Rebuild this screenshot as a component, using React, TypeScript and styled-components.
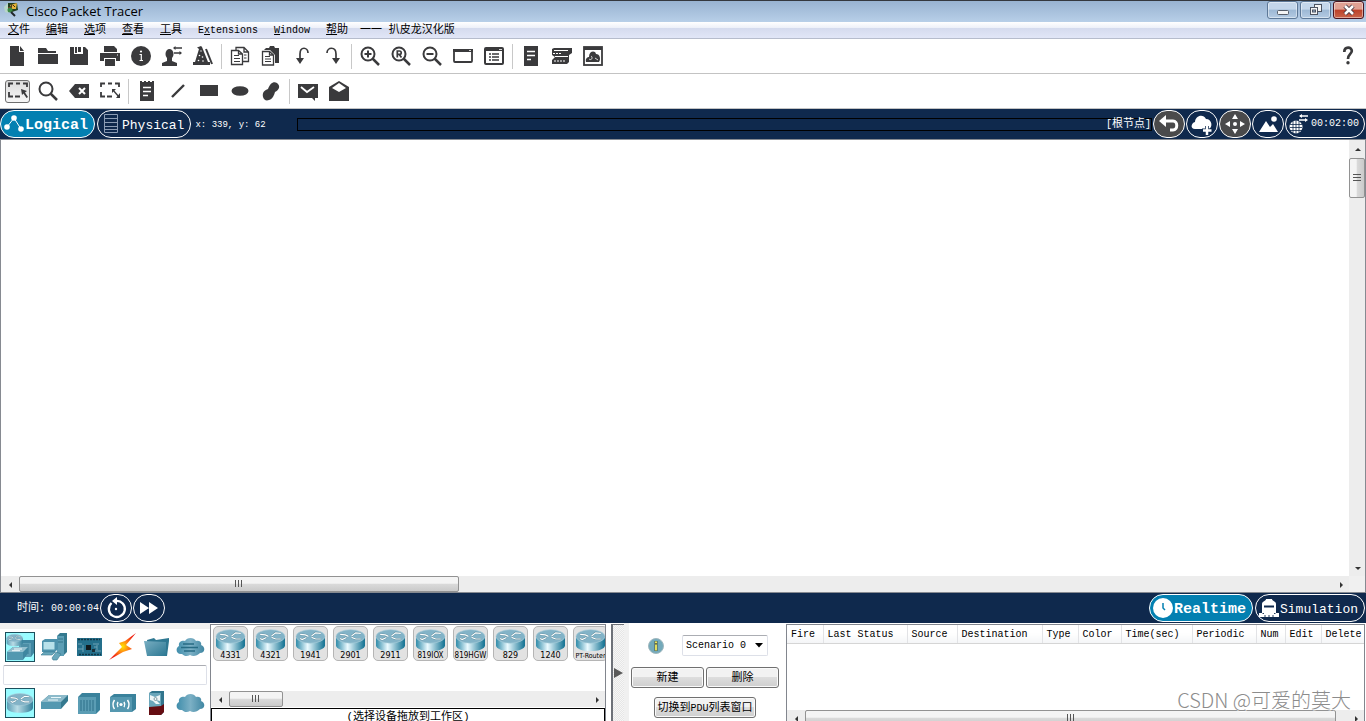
import React from "react";
import styled, { createGlobalStyle, css } from "styled-components";

const INK = "#3a3a3c";
const NAVY = "#0f294d";
const MONO = `"Liberation Mono", "Noto Sans CJK SC", monospace`;

const GlobalStyle = createGlobalStyle`
  * { box-sizing: border-box; }
  body { margin: 0; background: #fff; color: #000; font: 10px/14px ${MONO}; }
  button, input, select { font: inherit; color: inherit; margin: 0; padding: 0; }
  svg { display: block; flex: none; }
`;

const Window = styled.div`
  display: flex;
  flex-direction: column;
  height: 100vh;
  min-height: 480px;
  overflow: hidden;
  position: relative;
`;

const Cn = styled.span`
  font-size: 11px;
`;

/* ---------- title bar ---------- */
const TitleBar = styled.header`
  display: flex;
  height: 22px;
  flex: none;
  border-top: 1px solid #34383e;
  background: linear-gradient(#98b3d1, #b8cfe8);
  padding: 0 2px 0 4px;
`;
const Title = styled.h1`
  flex: 1;
  margin: 0 0 0 6px;
  font: 400 13px/20px "Open Sans", "Noto Sans", sans-serif;
`;
const WindowButtons = styled.div`
  display: flex;
  gap: 2px;
`;
const WindowButton = styled.button<{ $close?: boolean }>`
  width: 31px;
  height: 18px;
  display: flex;
  align-items: center;
  justify-content: center;
  border: 1px solid ${(p) => (p.$close ? "#4a1420" : "#5d7897")};
  border-radius: 3px;
  box-shadow: inset 0 0 0 1px rgba(255, 255, 255, 0.45);
  background: ${(p) =>
    p.$close
      ? "linear-gradient(#e0a193 0 45%, #bd4029 50%, #c9644a)"
      : "linear-gradient(#c4d6ea 0 45%, #9db8d4 50%, #b4cbe3)"};
`;

/* ---------- menu ---------- */
const MenuBar = styled.nav`
  display: flex;
  gap: 16px;
  flex: none;
  height: 17px;
  padding: 0 8px;
  border-bottom: 1px solid #b6bccc;
  background: linear-gradient(#fff, #eef1f9 35%, #d5dbee 40%, #e1e6f7);
`;
const MenuItem = styled.button`
  border: 0;
  background: none;
  line-height: 17px;
  white-space: nowrap;
`;
const MenuNote = styled(Cn)`
  margin-left: -4px;
  line-height: 17px;
  white-space: pre;
`;

/* ---------- toolbars ---------- */
const Toolbar = styled.div`
  display: flex;
  align-items: center;
  flex: none;
  height: 35px;
  padding: 0 3px 0 1px;
  border-bottom: 1px solid #c3c3c3;
  background: #fff;
`;
const ToolButton = styled.button<{ $active?: boolean }>`
  width: 31px;
  height: 26px;
  display: flex;
  align-items: center;
  justify-content: center;
  border: 0;
  background: none;
  ${(p) =>
    p.$active &&
    css`
      width: 25px;
      height: 23px;
      margin: 0 2px 0 4px;
      border: 1px solid #6e6e6e;
      border-radius: 3px;
      background: linear-gradient(#dcdcdc, #f6f6f6);
    `}
`;
const Separator = styled.span`
  width: 1px;
  height: 25px;
  margin: 0 2px 0 3px;
  background: #c8c8c8;
`;
const Spacer = styled.span`
  flex: 1;
`;

/* ---------- navy bars ---------- */
const NavyBar = styled.div`
  display: flex;
  align-items: center;
  flex: none;
  height: 30px;
  padding-right: 1px;
  background: ${NAVY};
  color: #fff;
`;
const ViewButton = styled.button<{ $active?: boolean }>`
  display: flex;
  align-items: center;
  height: 28px;
  padding: 0 6px 0 2px;
  margin-right: 2px;
  border: 1px solid #fff;
  border-radius: 14px;
  background: ${(p) => (p.$active ? "#0380b1" : NAVY)};
  font-size: ${(p) => (p.$active ? "15px" : "13px")};
  font-weight: ${(p) => (p.$active ? 700 : 400)};
  line-height: 20px;
  white-space: nowrap;
  &:last-child { margin-right: 0; }
`;
const ViewLabel = styled.span`
  padding-top: 3px;
`;
const Coordinates = styled.span`
  width: 104px;
  padding: 1px 0 0 2px;
  font-size: 9px;
`;
const PathBox = styled.div`
  display: flex;
  justify-content: flex-end;
  align-items: center;
  flex: 1;
  height: 13px;
  margin-right: 1px;
  border: 1px solid #000;
`;
const RoundButtons = styled.div`
  display: flex;
  gap: 1px;
`;
const RoundButton = styled.button<{ $gray?: boolean; $wide?: boolean }>`
  display: flex;
  align-items: center;
  justify-content: center;
  width: ${(p) => (p.$wide ? "80px" : "32px")};
  height: 28px;
  padding-right: ${(p) => (p.$wide ? "4px" : "0")};
  border: 1px solid #fff;
  border-radius: 14px;
  background: ${(p) => (p.$gray ? "#4a4a4b" : NAVY)};
`;
const Clock = styled.span`
  width: 100px;
  padding-left: 17px;
  white-space: nowrap;
`;

/* ---------- workspace ---------- */
const Workspace = styled.main`
  display: grid;
  grid-template-columns: 1fr 16px;
  grid-template-rows: 1fr 16px;
  flex: 1;
  min-height: 0;
  border: 1px solid #868a91;
  background: #fff;
`;
const Corner = styled.span`
  background: #f0f0f0;
`;
const ScrollTrack = styled.div<{ $vertical?: boolean }>`
  display: flex;
  flex: none;
  flex-direction: ${(p) => (p.$vertical ? "column" : "row")};
  ${(p) => (p.$vertical ? "width: 16px;" : "height: 16px;")}
  min-width: 0;
  background: #ededed;
`;
const ScrollArrow = styled.button`
  display: flex;
  align-items: center;
  justify-content: center;
  flex: none;
  width: 17px;
  height: 17px;
  border: 0;
  background: none;
`;
const ScrollRail = styled.div<{ $vertical?: boolean }>`
  display: flex;
  flex-direction: ${(p) => (p.$vertical ? "column" : "row")};
  flex: 1;
  min-width: 0;
  min-height: 0;
  padding: ${(p) => (p.$vertical ? "1px 0 0" : "0 0 0 1px")};
`;
const ScrollThumb = styled.div<{ $size: number; $vertical?: boolean }>`
  display: flex;
  align-items: center;
  justify-content: center;
  flex: 0 0 ${(p) => p.$size}%;
  border: 1px solid #929292;
  border-radius: 2px;
  background: ${(p) =>
    p.$vertical
      ? "linear-gradient(90deg, #f4f4f4 0 45%, #dadada 50%, #cacaca)"
      : "linear-gradient(#f4f4f4 0 45%, #dadada 50%, #cacaca)"};
`;

/* ---------- bottom area ---------- */
const Bottom = styled.div`
  display: flex;
  flex: none;
  height: 98px;
  background: #fff;
`;
const Categories = styled.section`
  flex: none;
  width: 210px;
  padding: 3px 3px 0;
  border-top: 6px solid #f0f0f0;
`;
const CategoryRow = styled.div`
  display: flex;
  gap: 4px;
  padding: 0 2px;
`;
const CategoryButton = styled.button<{ $active?: boolean }>`
  width: 30px;
  height: 30px;
  border: 0;
  background: ${(p) => (p.$active ? "#99fbff" : "none")};
  ${(p) => p.$active && "box-shadow: inset 0 0 0 1px #1c4f5c;"}
`;
const Search = styled.input`
  display: block;
  width: 100%;
  height: 20px;
  margin: 3px 0;
  padding: 0 4px;
  border: 1px solid #dde0e8;
  border-top-color: #abadb3;
  border-radius: 2px;
`;
const Devices = styled.section`
  display: flex;
  flex-direction: column;
  flex: none;
  width: 396px;
  margin-top: 1px;
  border: 1px solid #82868e;
  border-bottom: 0;
`;
const DeviceList = styled.div`
  display: flex;
  flex: none;
  gap: 5px;
  height: 66px;
  padding: 1px 2px;
  overflow: hidden;
`;
const DeviceButton = styled.button<{ $narrow?: boolean; $tiny?: boolean }>`
  display: flex;
  flex-direction: column;
  align-items: center;
  flex: none;
  width: 35px;
  height: 35px;
  border: 1px solid #b5b5b5;
  border-radius: 5px;
  background: #e2e2e2;
  font: ${(p) => (p.$tiny ? "7px" : "8px")}/10px ${(p) =>
    p.$narrow ? `"DejaVu Sans Condensed", "DejaVu Sans"` : `"DejaVu Sans"`}, sans-serif;
  white-space: nowrap;
`;
const DeviceHint = styled.p`
  flex: none;
  margin: 1px 0 0;
  padding-top: 1px;
  border: 1px solid #000;
  border-bottom: 0;
  font-size: 11px;
  line-height: 14px;
  text-align: center;
`;
const Splitter = styled.button`
  display: flex;
  align-items: center;
  justify-content: center;
  flex: none;
  width: 13px;
  margin: 1px 0 0 5px;
  border: 0;
  border-left: 2px solid #6d7178;
  border-top: 1px solid #6d7178;
  background: repeating-conic-gradient(#e6e6e6 0 25%, #f6f6f6 0 50%) 0 0 / 2px 2px;
`;
const Scenario = styled.section`
  flex: none;
  width: 162px;
  padding: 12px 7px 0 2px;
  border-left: 5px solid #f0f0f0;
`;
const ScenarioRow = styled.div<{ $head?: boolean }>`
  display: flex;
  align-items: center;
  justify-content: center;
  gap: ${(p) => (p.$head ? 18 : 2)}px;
  height: 21px;
  padding-left: ${(p) => (p.$head ? 6 : 0)}px;
  margin-bottom: ${(p) => (p.$head ? 11 : 9)}px;
`;
const SelectWrap = styled.label`
  display: flex;
  align-items: center;
  width: 86px;
  height: 21px;
  padding-right: 4px;
  border: 1px solid #dde0e8;
  border-top-color: #abadb3;
  border-radius: 2px;
`;
const Select = styled.select`
  flex: 1;
  min-width: 0;
  padding-left: 3px;
  border: 0;
  appearance: none;
  background: none;
`;
const PushButton = styled.button`
  flex: 0 1 auto;
  min-width: 73px;
  height: 21px;
  padding: 1px 2px 0;
  border: 1px solid #707070;
  border-radius: 3px;
  box-shadow: inset 0 0 0 1px #fafafa;
  background: linear-gradient(#f2f2f2 0 45%, #dddddd 50%, #cfcfcf);
  font-size: 11px;
  line-height: 16px;
  white-space: nowrap;
`;
const Latin = styled.span`
  font-size: 10px;
`;
const PduPanel = styled.section`
  display: flex;
  flex-direction: column;
  flex: 1;
  min-width: 0;
  margin: 1px 1px 0 0;
  border: 1px solid #82868e;
  border-bottom: 0;
`;
const TableArea = styled.div`
  flex: none;
  height: 85px;
  overflow: hidden;
`;
const Table = styled.table`
  width: 100%;
  border-collapse: collapse;
  table-layout: fixed;
`;
const HeadCell = styled.th<{ $width?: number }>`
  ${(p) => p.$width && `width: ${p.$width}px;`}
  height: 18px;
  padding: 3px 0 0 4px;
  border-right: 1px solid #e2e3e6;
  border-bottom: 1px solid #d5d5d5;
  background: linear-gradient(#fff 0 45%, #f4f5f7);
  font-weight: 400;
  text-align: left;
  white-space: nowrap;
  &:last-child { border-right: 0; }
`;
const Watermark = styled.span`
  position: absolute;
  right: 15px;
  bottom: 7px;
  color: #8c8c8c;
  font: 300 20px/28px "Noto Sans CJK SC", sans-serif;
  text-shadow: 1px 1px 0 #fff;
  pointer-events: none;
`;

/* ---------- drawings ---------- */
const Icon = ({ children }: { children: React.ReactNode }) => (
  <svg width="20" height="20" viewBox="0 0 20 20" fill={INK} aria-hidden="true">
    {children}
  </svg>
);

const magnifier = (
  <>
    <circle cx="8" cy="8" r="6.500" fill="none" stroke={INK} strokeWidth="2" />
    <path d="M12.500 12.500L19 19" stroke={INK} strokeWidth="2.500" />
  </>
);
const line = { fill: "none", stroke: INK };
const white = { fill: "none", stroke: "#fff" };
const marquee = (
  <path
    d="M1 6V2.500H5M8 2.500H12M15 2.500H19V6M1 11V15.500H5M7 15.500H12"
    {...line}
    strokeWidth="1.800"
  />
);

const icons: Record<string, React.ReactNode> = {
  New: <path d="M3 0H12V6H17V20H3zM13 0L17 5H13z" />,
  Open: <path d="M0 2H8L10 5H18V7H0zM0 8H20V18H0z" />,
  Save: (
    <path fillRule="evenodd" d="M1 1H5V8H14V1H16L19 4V19H1zM9 1H12V6H9zM6 1H8V7H6z" />
  ),
  Print: (
    <>
      <path d="M4 0H14L17 3V6H4zM0 7H20V15H16V12H4V15H0zM5 13H15V20H5z" />
      <path d="M17 9h1" {...white} />
    </>
  ),
  "Activity Wizard": (
    <>
      <circle cx="10" cy="10" r="10" />
      <path d="M8.500 8.500H10.300V14.500M8.500 14.500H12" {...white} strokeWidth="1.200" />
      <circle cx="10" cy="5.500" r="1.100" fill="#fff" />
    </>
  ),
  "User Profile": (
    <>
      <ellipse cx="7.500" cy="8" rx="4" ry="5" />
      <path d="M5 11H10V15L15 17V20H0V17L5 15z" />
      <path d="M13 2H20M12 7H19" {...line} strokeWidth="1.600" />
      <path d="M13.500 0V4L11 2zM17.500 5V9L20 7z" />
    </>
  ),
  "Custom Devices": (
    <>
      <path d="M9 1L15 16H17V19H0V16H2L6 3L4 1.500L8 0z" />
      <path d="M13 3L19 18" {...line} strokeWidth="2" />
      <circle cx="8" cy="5" r="0.700" fill="#fff" />
      <circle cx="6.500" cy="9.500" r="0.800" fill="#fff" />
      <circle cx="9.500" cy="11" r="0.800" fill="#fff" />
      <circle cx="5.500" cy="14.500" r="0.800" fill="#fff" />
      <circle cx="10" cy="15" r="0.800" fill="#fff" />
    </>
  ),
  Copy: (
    <>
      <path d="M6 4V1.500H14L18.500 6V15.500H13M14 1.500V6H18" {...line} strokeWidth="1.300" />
      <path d="M1.500 4.500H8.500L12.500 8V18.500H1.500zM8.500 4.500V8H12.500" {...line} strokeWidth="1.300" />
      <path d="M4 9.500H9M4 12.500H10M4 15.500H10M14 9H16.500M14 12H16.500" {...line} />
    </>
  ),
  Paste: (
    <>
      <path d="M3 4L5 2H8L9 0H13L14 2H18V17H14V9L9 4z" />
      <path d="M1.500 5.500H8.500L12.500 9V19H1.500zM8.500 5.500V9H12.500" {...line} strokeWidth="1.300" />
      <path d="M4 10.500H9M4 13H10M4 15.500H10" {...line} />
    </>
  ),
  Undo: (
    <>
      <path d="M16 7C16 1 8 0 8 8V13" {...line} strokeWidth="1.700" />
      <path d="M4 12H12L8 18z" />
    </>
  ),
  Redo: (
    <>
      <path d="M4 7C4 1 13 0 13 8V13" {...line} strokeWidth="1.700" />
      <path d="M9 12H17L13 18z" />
    </>
  ),
  "Zoom In": (
    <>
      {magnifier}
      <path d="M4.500 8H11.500M8 4.500V11.500" {...line} strokeWidth="2" />
    </>
  ),
  "Zoom Reset": (
    <>
      {magnifier}
      <path d="M6.300 11.500V5H8.500A1.700 1.700 0 0 1 8.500 8.400H6.300M8.300 8.400L10.500 11.500" {...line} strokeWidth="1.700" />
    </>
  ),
  "Zoom Out": (
    <>
      {magnifier}
      <path d="M4.500 8H11.500" {...line} strokeWidth="2" />
    </>
  ),
  Viewport: (
    <>
      <rect x="1" y="4" width="18" height="12" rx="1" {...line} strokeWidth="1.800" />
      <path d="M0 3H20V6H0z" />
      <path d="M16 4.500H18" {...white} strokeWidth="0.800" />
    </>
  ),
  "Workspace List": (
    <>
      <rect x="1" y="2" width="18" height="16" rx="1" {...line} strokeWidth="2" />
      <path d="M1 3.500H19" {...line} strokeWidth="3" />
      <path d="M5 8H7M8 8H15M5 11H7M8 11H15M5 14H7M8 14H15" {...line} strokeWidth="1.500" />
      <path d="M15 3.500H18" {...white} strokeWidth="0.800" />
    </>
  ),
  Palette: (
    <>
      <rect x="3" width="14" height="20" />
      <path d="M6 5.500H14M6 9.500H14M6 13.500H10" {...white} strokeWidth="1.500" />
    </>
  ),
  "Device Rack": (
    <>
      <path d="M0 3L2 2H20V7L17 9V16L15 18H0V14L3 11L0 9z" />
      <path d="M2 4.500H16M1 7.500H3M4 7.500H6M7 7.500H9M3 10.500H16M2 15H4M5 15H7M8 15H10M11 15H13" {...white} strokeWidth="1" />
    </>
  ),
  "Cloud Window": (
    <>
      <rect x="1" y="1" width="18" height="18" {...line} strokeWidth="1.800" />
      <path d="M1 2.500H19" {...line} strokeWidth="3" />
      <path d="M3 16C2 12 5 11 6 11C6 5 12 4 13 8C17 8 18 13 16 16z" />
      <path d="M6 13C9 15 10 11 8 10M12 12L15 14" {...white} strokeWidth="0.800" />
    </>
  ),
  Help: (
    <>
      <path d="M6.300 6C6.300 0 14 0.500 13.800 5C13.600 8 10 8 10 13" {...line} strokeWidth="2.700" />
      <circle cx="10" cy="16.800" r="1.700" />
    </>
  ),
  Select: (
    <>
      {marquee}
      <path d="M13 8L19 10L17 11.500L20 16L18.500 17L15.500 12.500L14 14z" />
    </>
  ),
  Inspect: magnifier,
  Delete: (
    <>
      <path d="M0 10L6 3H20V17H6z" />
      <path d="M10 7L16 13M16 7L10 13" {...white} strokeWidth="2" />
    </>
  ),
  Resize: (
    <>
      {marquee}
      <path d="M12 8H16L12 12zM20 12V17H16z" />
      <path d="M13 9L19 16" {...line} strokeWidth="1.300" />
    </>
  ),
  "Place Note": (
    <>
      <path d="M3 0H5V1H7V0H9V1H11V0H13V1H15V0H17V20H3z" />
      <path d="M6 6.500H14M6 10.500H14M6 14.500H11" {...white} strokeWidth="1.300" />
    </>
  ),
  "Draw Line": <path d="M4 16L16 4" {...line} strokeWidth="2.400" />,
  "Draw Rectangle": <rect x="1" y="4" width="18" height="11" />,
  "Draw Ellipse": <ellipse cx="10" cy="10" rx="8.500" ry="4.800" />,
  "Draw Freeform": (
    <path d="M2 16C1 11 4 9 7 8C9 3 12 0 16 2C20 5 18 9 14 11C13 14 12 18 8 19C5 20 3 19 2 16z" />
  ),
  "Simple PDU": (
    <>
      <path d="M0 3H20V17H17V20L14 17H0z" />
      <path d="M3 6L9 11L16 6" {...white} strokeWidth="1.800" />
    </>
  ),
  "Complex PDU": (
    <>
      <path d="M0 6L10 0L20 6V20H0z" />
      <path d="M3 7L10 2L17 7L10 11z" fill="#fff" />
    </>
  ),
};

const Tool = ({ name, active }: { name: string; active?: boolean }) => (
  <ToolButton type="button" aria-label={name} $active={active}>
    <Icon>{icons[name]}</Icon>
  </ToolButton>
);

const ToolGroups = ({ groups }: { groups: string[][] }) => (
  <>
    {groups.map((g, i) => (
      <React.Fragment key={i}>
        {i > 0 && <Separator />}
        {g.map((n) => (
          <Tool key={n} name={n} active={n === "Select"} />
        ))}
      </React.Fragment>
    ))}
  </>
);

const arrows = { left: "M6 1V7L3 4z", right: "M3 1V7L6 4z", up: "M1 6H7L4 3z", down: "M1 3H7L4 6z" };
const Arrow = ({ dir }: { dir: keyof typeof arrows }) => (
  <ScrollArrow type="button" aria-label={`Scroll ${dir}`}>
    <svg width="8" height="8" viewBox="0 0 8 8" fill="#333">
      <path d={arrows[dir]} />
    </svg>
  </ScrollArrow>
);
const ScrollBar = ({ size, vertical }: { size: number; vertical?: boolean }) => (
  <ScrollTrack $vertical={vertical}>
    <Arrow dir={vertical ? "up" : "left"} />
    <ScrollRail $vertical={vertical}>
      <ScrollThumb $size={size} $vertical={vertical}>
        <svg width="8" height="8" viewBox="0 0 8 8" stroke="#555">
          <path d={vertical ? "M0 .5H8M0 3.5H8M0 6.5H8" : "M.5 0V7M3.5 0V7M6.5 0V7"} />
        </svg>
      </ScrollThumb>
    </ScrollRail>
    <Arrow dir={vertical ? "down" : "right"} />
  </ScrollTrack>
);

const Gradients = () => (
  <svg width="0" height="0" style={{ position: "absolute" }} aria-hidden="true">
    <defs>
      <linearGradient id="drum">
        <stop offset="0" stopColor="#2f8aa8" />
        <stop offset="0.4" stopColor="#eafaff" />
        <stop offset="1" stopColor="#0f6f90" />
      </linearGradient>
      <linearGradient id="soft">
        <stop offset="0" stopColor="#5a9db5" />
        <stop offset="0.4" stopColor="#b9dce6" />
        <stop offset="1" stopColor="#34809b" />
      </linearGradient>
      <linearGradient id="steel" x2="1" y2="1">
        <stop offset="0" stopColor="#79aec2" />
        <stop offset="1" stopColor="#2c7893" />
      </linearGradient>
      <linearGradient id="cloud">
        <stop offset="0" stopColor="#3f8dab" />
        <stop offset="0.5" stopColor="#7cb0c5" />
        <stop offset="1" stopColor="#3f86a2" />
      </linearGradient>
      <radialGradient id="bolt">
        <stop offset="0" stopColor="#ffe600" />
        <stop offset="0.5" stopColor="#ff7b16" />
        <stop offset="1" stopColor="#ee1c10" />
      </radialGradient>
    </defs>
  </svg>
);

const routerArrows = "M5 5L10 5.5L13 7M11 8L7 10L5 9M25 4L20 3.5L16 6.500M16 8L20 9.500L25 9.500";
const RouterShape = ({ fill }: { fill: string }) => (
  <>
    <path d="M1 7V16C2 23 28 23 29 16V7z" fill={`url(#${fill})`} />
    <ellipse cx="15" cy="7" rx="14" ry="6.500" fill="#83b3c7" stroke="#a8ccd9" strokeWidth="0.600" />
    <path d={routerArrows} fill="none" stroke="#4d7f90" strokeWidth="1.800" />
    <path d={routerArrows} fill="none" stroke="#fff" strokeWidth="1.200" />
  </>
);
const cloudPath =
  "M7 22C1 23 0 16 4 14C3 9 8 8 10 9C12 5 19 5 21 9C25 8 27 11 26 13C31 15 30 21 25 21C22 24 18 25 15 23C12 25 9 24 7 22z";

const categoryArt: Record<string, React.ReactNode> = {
  "Network Devices": (
    <>
      <path d="M14 11L17 8H29V21L26 25H14z" fill="#3f86a1" />
      <path d="M14 11H26V25H14z" fill="#5e9fb6" />
      <path d="M17 12V22M19 12V22M21 12V22M23 12V22" stroke="#2f718a" strokeWidth="0.700" />
      <g transform="translate(1 2) scale(.58)"><RouterShape fill="soft" /></g>
      <path d="M2 20L8 15H23V21L18 28H2z" fill="#3e86a0" />
      <path d="M2 20L8 15H23L18 20z" fill="#94c0cf" />
      <path d="M2 20H18V28H2z" fill="#5398b0" />
      <path d="M9 17H17M7 18.700H15" stroke="#fff" strokeWidth="0.900" />
    </>
  ),
  "End Devices": (
    <>
      <path d="M18 4L21 1H28V20L24 24H18z" fill="#34798f" />
      <path d="M18 4H25V24H18z" fill="#5c9eb5" />
      <path d="M19 7H24M19 10H24" fill="none" stroke="#2b6c84" strokeWidth="0.800" />
      <path d="M3 9L6 7H19V17L16 20H3z" fill="#4d92ac" />
      <rect x="4.500" y="10" width="11" height="7.500" fill="#b8e1ea" />
      <path d="M2 23L5 20H16L13 23zM13 26L17 20L22 22L18 28H14z" fill="#6aa8bc" stroke="#387991" strokeWidth="0.600" />
    </>
  ),
  Components: (
    <>
      <path d="M4 6H29V24H4z" fill="#246f8b" />
      <path d="M5 7.500H27M6 22.500H28" stroke="#123848" strokeWidth="1.500" strokeDasharray="2 1" />
      <rect x="13" y="13" width="5" height="5" fill="#11191d" />
      <path d="M5 12H9M5 17H10M20 12H26M21 15H24M20 19H28M10 13V20M24 13V18" stroke="#6ea3b5" />
      <path d="M19 17H22V20H19z" fill="#192f38" />
    </>
  ),
  Connections: <path d="M29 1L18 9L12 11L15 15L2 28L16 20L25 17L19 13z" fill="url(#bolt)" />,
  Miscellaneous: (
    <>
      <path d="M6 8L13 6L15 8L28 6V9L26 24H8z" fill="#2f7892" />
      <path d="M3 9L25 10V24H6z" fill="url(#steel)" />
    </>
  ),
  "Multiuser Connection": (
    <>
      <path d={cloudPath} fill="url(#cloud)" />
      <path d="M8 12H19M6 15.500H23M9 19H20" stroke="#276b84" strokeWidth="1.300" />
    </>
  ),
  Routers: <g transform="translate(1 5) scale(.93)"><RouterShape fill="soft" /></g>,
  Switches: (
    <>
      <path d="M2 14L10 7H29V13L22 21H2z" fill="#34798f" />
      <path d="M2 14L10 7H29L22 14z" fill="#8cbaca" />
      <path d="M2 14H22V21H2z" fill="#5398b0" />
      <path d="M12 9.500H22M9 12H19" stroke="#e9f7fa" />
    </>
  ),
  Hubs: (
    <>
      <path d="M5 9L9 5H27V22L23 26H5z" fill="#3a829c" />
      <rect x="5" y="9" width="18" height="17" fill="#5b9db4" />
      <path d="M8 12V23M11 12V23M14 12V23M17 12V23M20 12V23" stroke="#2d6f88" />
    </>
  ),
  "Wireless Devices": (
    <>
      <path d="M3 9L7 6H29V21L25 24H3z" fill="#3a829c" />
      <rect x="3" y="9" width="22" height="15" fill="#5598b0" />
      <circle cx="14" cy="16.500" r="1.600" fill="#fff" />
      <path d="M11 14Q9.500 16.500 11 19M17 14Q18.500 16.500 17 19M7.500 12Q4.500 16.500 7.500 21M20.500 12Q23.500 16.500 20.500 21" fill="none" stroke="#fff" strokeWidth="1.500" />
    </>
  ),
  Security: (
    <>
      <path d="M8 5L11 3H23V24L20 27H8z" fill="#32758d" />
      <path d="M8 5H20V19H8z" fill="#6aa6ba" />
      <path d="M8 19L20 18L23 16V24L20 27H8z" fill="#650d12" />
      <path d="M9 7L14 9L19 7V13L15 12L19 16H15L12 13L9 12z" fill="#eef6f7" />
      <circle cx="14.500" cy="11" r="1.500" fill="none" stroke="#5a7a84" strokeWidth="0.700" />
    </>
  ),
  "WAN Emulation": <path d={cloudPath} fill="url(#cloud)" />,
};
const categoryRows = [Object.keys(categoryArt).slice(0, 6), Object.keys(categoryArt).slice(6)];

const devices = ["4331", "4321", "1941", "2901", "2911", "819IOX", "819HGW", "829", "1240", "PT-Router"];
const columns: [string, number?][] = [
  ["Fire", 36], ["Last Status", 84], ["Source", 50], ["Destination", 85], ["Type", 36],
  ["Color", 43], ["Time(sec)", 71], ["Periodic", 64], ["Num", 29], ["Edit", 36], ["Delete"],
];
const menus: [string, string, string][] = [
  ["", "文", "件"], ["", "编", "辑"], ["", "选", "项"], ["", "查", "看"], ["", "工", "具"],
  ["E", "x", "tensions"], ["", "W", "indow"], ["", "帮", "助"],
];

const Glyph = ({ children, w = 24 }: { children: React.ReactNode; w?: number }) => (
  <svg width={w} height="24" viewBox={`0 0 ${w} 24`} fill="#fff" aria-hidden="true">
    {children}
  </svg>
);

const CategoryButtons = ({ names }: { names: string[] }) => (
  <CategoryRow>
    {names.map((n, i) => (
      <CategoryButton key={n} type="button" aria-label={n} $active={i === 0}>
        <svg width="30" height="30" viewBox="0 0 30 30">{categoryArt[n]}</svg>
      </CategoryButton>
    ))}
  </CategoryRow>
);

export default function App() {
  return (
    <Window>
      <GlobalStyle />
      <Gradients />
      <TitleBar>
        <svg width="16" height="20" viewBox="0 0 16 20">
          <path d="M0 6L4 2V12L1 11z" fill="#b7d6c9" />
          <path d="M4 2L13 2L14 9L8 11L4 9z" fill="#22401f" />
          <path d="M6 4L13 2L12 8L8 8z" fill="#e4b23b" />
          <path d="M9 4L11 6M8 3L7 7" stroke="#3a2a14" />
          <path d="M4 6L8 7L6 9z" fill="#c8372a" />
          <circle cx="6" cy="9" r="2.500" fill="#3c8a45" />
          <path d="M7 11L11 15" stroke="#20262a" strokeWidth="2" />
        </svg>
        <Title>Cisco Packet Tracer</Title>
        <WindowButtons>
          <WindowButton type="button" aria-label="Minimize">
            <svg width="12" height="12" viewBox="0 0 12 12">
              <rect x="0.500" y="6.500" width="11" height="4" rx="1" fill="#f4f4f4" stroke="#555c68" />
            </svg>
          </WindowButton>
          <WindowButton type="button" aria-label="Restore">
            <svg width="12" height="12" viewBox="0 0 12 12" fill="#f4f4f4" stroke="#4d5462">
              <rect x="4.500" y="0.500" width="7" height="7" />
              <rect x="0.500" y="3.500" width="7" height="7" />
              <rect x="2.500" y="6" width="3" height="2" fill="#9ab3cf" />
            </svg>
          </WindowButton>
          <WindowButton type="button" aria-label="Close" $close>
            <svg width="12" height="12" viewBox="0 0 12 12">
              <path d="M2 2L10 10M10 2L2 10" stroke="#4a3a42" strokeWidth="4.500" />
              <path d="M2 2L10 10M10 2L2 10" stroke="#fff" strokeWidth="2.500" />
            </svg>
          </WindowButton>
        </WindowButtons>
      </TitleBar>

      <MenuBar>
        {menus.map(([before, key, after]) => {
          const Text = key > "z" ? Cn : React.Fragment;
          return (
            <MenuItem key={key} type="button">
              <Text>{before}<u>{key}</u>{after}</Text>
            </MenuItem>
          );
        })}
        <MenuNote>一一 扒皮龙汉化版</MenuNote>
      </MenuBar>

      <Toolbar>
        <ToolGroups
          groups={[
            ["New", "Open", "Save", "Print", "Activity Wizard", "User Profile", "Custom Devices"],
            ["Copy", "Paste", "Undo", "Redo"],
            ["Zoom In", "Zoom Reset", "Zoom Out", "Viewport", "Workspace List"],
            ["Palette", "Device Rack", "Cloud Window"],
          ]}
        />
        <Spacer />
        <Tool name="Help" />
      </Toolbar>
      <Toolbar>
        <ToolGroups
          groups={[
            ["Select", "Inspect", "Delete", "Resize"],
            ["Place Note", "Draw Line", "Draw Rectangle", "Draw Ellipse", "Draw Freeform"],
            ["Simple PDU", "Complex PDU"],
          ]}
        />
      </Toolbar>

      <NavyBar>
        <ViewButton type="button" $active>
          <Glyph w={22}>
            <path d="M4 15L11 6L18 17" fill="none" stroke="#fff" />
            <circle cx="11" cy="6" r="2.800" />
            <circle cx="4" cy="15" r="2.800" />
            <circle cx="18" cy="17" r="2.800" />
          </Glyph>
          <ViewLabel>Logical</ViewLabel>
        </ViewButton>
        <ViewButton type="button">
          <Glyph w={22}>
            <path d="M4.500 2.500H17.500V20.500H4.500zM4.500 6.500H17.500M4.500 10.500H17.500M4.500 14.500H17.500M4.500 17.500H17.500" fill="none" stroke="#8c9db5" />
          </Glyph>
          <ViewLabel>Physical</ViewLabel>
        </ViewButton>
        <Coordinates>x: 339, y: 62</Coordinates>
        <PathBox><span>[<Cn>根节点</Cn>]</span></PathBox>
        <RoundButtons>
          <RoundButton type="button" aria-label="Back" $gray>
            <Glyph>
              <path d="M2 9L9 3V15z" />
              <path d="M8 9H16C21 9 21 18 16 18H13" fill="none" stroke="#fff" strokeWidth="3" />
            </Glyph>
          </RoundButton>
          <RoundButton type="button" aria-label="New Cluster">
            <Glyph>
              <path d="M5 17C0 17 1 11 5 10C5 4 13 1 16 7C22 7 23 15 19 17z" />
              <path d="M17 14V23M12 18.500H22" stroke={NAVY} strokeWidth="4" />
              <path d="M17 14V23M13 18.500H21.500" stroke="#fff" strokeWidth="2.500" />
            </Glyph>
          </RoundButton>
          <RoundButton type="button" aria-label="Move Object" $gray>
            <Glyph>
              <path d="M12 2L15 7H9zM12 22L15 17H9zM2 12L7 9V15zM22 12L17 9V15z" />
              <circle cx="12" cy="12" r="2" />
            </Glyph>
          </RoundButton>
          <RoundButton type="button" aria-label="Set Background">
            <Glyph>
              <path d="M3 20L10 9L14 15L17 12L22 20z" />
              <circle cx="18" cy="7" r="2.800" />
            </Glyph>
          </RoundButton>
          <RoundButton type="button" $wide>
            <Glyph>
              <circle cx="9" cy="15" r="6.500" />
              <path d="M3 12.500H15M3 15.500H15M3 18.500H15M6 9V21M9 8V22M12 9V21" stroke={NAVY} strokeWidth="0.800" />
              <path d="M13 4H21M12 8H19" stroke="#fff" strokeWidth="1.600" />
              <path d="M15 2V6L12 4zM18 6V10L21 8z" />
            </Glyph>
            00:02:00
          </RoundButton>
        </RoundButtons>
      </NavyBar>

      <Workspace>
        <div />
        <ScrollBar size={10} vertical />
        <ScrollBar size={33.5} />
        <Corner />
      </Workspace>

      <NavyBar>
        <Clock><Cn>时间</Cn>: 00:00:04</Clock>
        <RoundButtons>
          <RoundButton type="button" aria-label="Power Cycle Devices">
            <Glyph>
              <path d="M7.500 7A8 8 0 1 0 12 5" fill="none" stroke="#fff" strokeWidth="2.300" />
              <path d="M8 5L13 1V9z" />
              <circle cx="12" cy="13" r="1.200" />
            </Glyph>
          </RoundButton>
          <RoundButton type="button" aria-label="Fast Forward Time">
            <Glyph><path d="M3 6L12 12L3 18zM12 6L21 12L12 18z" /></Glyph>
          </RoundButton>
        </RoundButtons>
        <Spacer />
        <ViewButton type="button" $active>
          <Glyph w={22}>
            <circle cx="11" cy="12" r="10" />
            <path d="M11 7V12L13 14" fill="none" stroke="#0380b1" strokeWidth="1.500" />
          </Glyph>
          <ViewLabel>Realtime</ViewLabel>
        </ViewButton>
        <ViewButton type="button">
          <Glyph w={22}>
            <path d="M4 8C4 5 8 5 8 3H14C14 5 18 5 18 8V17H21V21H1V17H4z" />
            <path d="M6 10.500H16" stroke={NAVY} strokeWidth="2" />
            <path d="M4.500 17.500H6M16 17.500H17.500M7 19V21M11 19V21M15 19V21" stroke={NAVY} strokeWidth="0.900" />
          </Glyph>
          <ViewLabel>Simulation</ViewLabel>
        </ViewButton>
      </NavyBar>

      <Bottom>
        <Categories>
          <CategoryButtons names={categoryRows[0]} />
          <Search type="text" aria-label="Search devices" />
          <CategoryButtons names={categoryRows[1]} />
        </Categories>
        <Devices>
          <DeviceList>
            {devices.map((d) => (
              <DeviceButton key={d} type="button" $narrow={d.length > 5} $tiny={d.length > 8}>
                <svg width="31" height="24" viewBox="0 -2 30 23"><RouterShape fill="drum" /></svg>
                {d}
              </DeviceButton>
            ))}
          </DeviceList>
          <ScrollBar size={15} />
          <DeviceHint>(选择设备拖放到工作区)</DeviceHint>
        </Devices>
        <Splitter type="button" aria-label="Toggle PDU panel">
          <svg width="9" height="10" viewBox="0 0 9 10"><path d="M0 0L9 5L0 10z" fill="#5a5a5a" /></svg>
        </Splitter>
        <Scenario>
          <ScenarioRow $head>
            <svg width="16" height="16" viewBox="0 0 16 16" role="img" aria-label="Scenario info">
              <circle cx="8" cy="8" r="7.500" fill="#73a9ba" stroke="#a0b8be" />
              <path d="M8 3V13" stroke="#48543c" strokeWidth="3" fill="none" />
              <path d="M8 6.500V12.500" stroke="#f3ee62" strokeWidth="1.800" />
              <circle cx="8" cy="4.300" r="1.100" fill="#f3ee62" />
            </svg>
            <SelectWrap>
              <Select aria-label="Scenario"><option>Scenario 0</option></Select>
              <svg width="8" height="5" viewBox="0 0 8 5"><path d="M0 0H8L4 4.500z" /></svg>
            </SelectWrap>
          </ScenarioRow>
          <ScenarioRow>
            <PushButton type="button">新建</PushButton>
            <PushButton type="button">删除</PushButton>
          </ScenarioRow>
          <ScenarioRow>
            <PushButton type="button">切换到<Latin>PDU</Latin>列表窗口</PushButton>
          </ScenarioRow>
        </Scenario>
        <PduPanel>
          <TableArea>
            <Table>
              <thead>
                <tr>
                  {columns.map(([name, width]) => (
                    <HeadCell key={name} scope="col" $width={width}>{name}</HeadCell>
                  ))}
                </tr>
              </thead>
              <tbody />
            </Table>
          </TableArea>
          <ScrollBar size={98} />
        </PduPanel>
      </Bottom>
      <Watermark>CSDN @可爱的莫大</Watermark>
    </Window>
  );
}
